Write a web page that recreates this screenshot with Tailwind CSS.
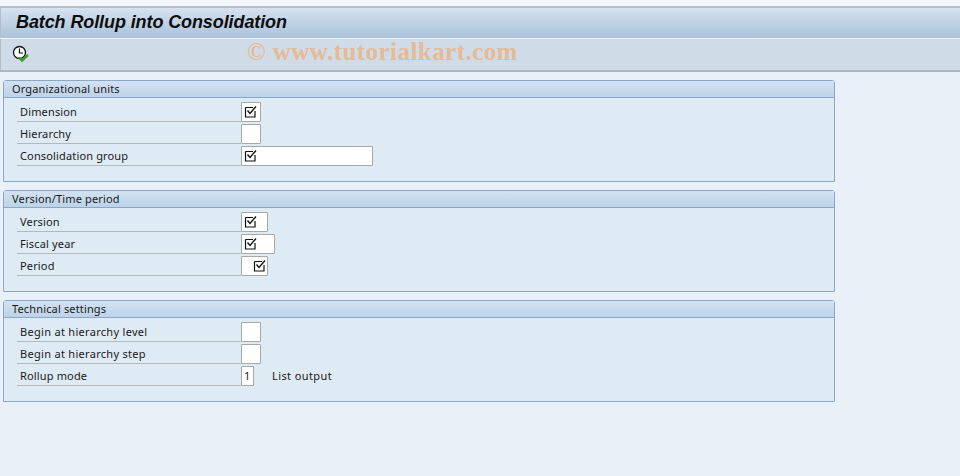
<!DOCTYPE html>
<html>
<head>
<script src="https://cdn.jsdelivr.net/npm/@tailwindcss/browser@4"></script>
</head>
<body class="m-0 overflow-hidden">
<div class="w-[960px] h-[476px] bg-[#e9f0f8] font-['Noto_Sans',sans-serif] text-[11px] tracking-[0.15px] text-[#1a1a1a] flex flex-col overflow-hidden">
  <div class="h-[6px] bg-[#f3f6fb]"></div>
  <div class="h-[2px] bg-[#b3bccb]"></div>
  <div class="h-[30px] bg-gradient-to-b from-[#d5e2f0] to-[#aac2da] pl-[15px] flex items-center border-l border-[#b3bccb]">
    <span class="font-['Liberation_Sans',sans-serif] font-bold italic text-[18px] tracking-[-0.1px] text-[#0d0d0d] leading-[26px] mt-[-2px]">Batch Rollup into Consolidation</span>
  </div>
  <div class="h-[1px] bg-[#eef3f9]"></div>
  <div class="h-[33px] bg-[#cfdce8] border-b-[2px] border-[#a9b6c6] flex items-center relative border-l border-l-[#b3bccb]">
    <svg class="ml-[11px] mt-[-1px]" width="18" height="18" viewBox="0 0 18 18" fill="none">
      <circle cx="7.5" cy="7.5" r="6" fill="#ffffff" stroke="#111111" stroke-width="1.3"/>
      <path d="M7.5 3.5V8H11" stroke="#111111" stroke-width="1.2"/>
      <path d="M7 12.5L10 15.5L16 10" stroke="#3f9e2e" stroke-width="2.4"/>
    </svg>
    <span class="absolute left-[246px] top-[-2px] font-['Liberation_Serif',serif] font-bold text-[25px] leading-[30px] text-[#e5ba94] tracking-[0.45px]">© www.tutorialkart.com</span>
  </div>
  <div class="flex flex-col gap-[8px] pt-[8px] pl-[3px]">

    <section class="w-[832px] h-[102px] border border-[#8aa8c6] rounded-tr-[3px] rounded-tl-[3px] bg-[#deeaf4]">
      <div class="h-[17px] bg-gradient-to-b from-[#d3e2f1] to-[#bdd3e8] border-b border-[#8aa8c6] pl-[8px] leading-[16px] text-[#1a1a1a]">Organizational units</div>
      <div class="pt-[4px] pl-[13px] flex flex-col gap-[2px]">
        <div class="flex h-[20px]">
          <div class="w-[224px] border-b border-[#b4b8bc] pl-[3px] leading-[20px]">Dimension</div>
          <div class="w-[20px] h-[20px] bg-white border border-[#a8a8a8] rounded-[1px] flex items-center pl-[2px]"><svg width="14" height="14" viewBox="0 0 14 14" fill="none"><path d="M1.5 2.5H9M1.5 2.5V12H11V6" stroke="#111" stroke-width="1.2"/><path d="M3.5 5.5L6 8.5L12 1.5" stroke="#111" stroke-width="1.4"/></svg></div>
        </div>
        <div class="flex h-[20px]">
          <div class="w-[224px] border-b border-[#b4b8bc] pl-[3px] leading-[20px]">Hierarchy</div>
          <div class="w-[20px] h-[20px] bg-white border border-[#a8a8a8] rounded-[1px]"></div>
        </div>
        <div class="flex h-[20px]">
          <div class="w-[224px] border-b border-[#b4b8bc] pl-[3px] leading-[20px]">Consolidation group</div>
          <div class="w-[132px] h-[20px] bg-white border border-[#a8a8a8] rounded-[1px] flex items-center pl-[2px]"><svg width="14" height="14" viewBox="0 0 14 14" fill="none"><path d="M1.5 2.5H9M1.5 2.5V12H11V6" stroke="#111" stroke-width="1.2"/><path d="M3.5 5.5L6 8.5L12 1.5" stroke="#111" stroke-width="1.4"/></svg></div>
        </div>
      </div>
    </section>

    <section class="w-[832px] h-[102px] border border-[#8aa8c6] rounded-tr-[3px] rounded-tl-[3px] bg-[#deeaf4]">
      <div class="h-[17px] bg-gradient-to-b from-[#d3e2f1] to-[#bdd3e8] border-b border-[#8aa8c6] pl-[8px] leading-[16px] text-[#1a1a1a]">Version/Time period</div>
      <div class="pt-[4px] pl-[13px] flex flex-col gap-[2px]">
        <div class="flex h-[20px]">
          <div class="w-[224px] border-b border-[#b4b8bc] pl-[3px] leading-[20px]">Version</div>
          <div class="w-[27px] h-[20px] bg-white border border-[#a8a8a8] rounded-[1px] flex items-center pl-[2px]"><svg width="14" height="14" viewBox="0 0 14 14" fill="none"><path d="M1.5 2.5H9M1.5 2.5V12H11V6" stroke="#111" stroke-width="1.2"/><path d="M3.5 5.5L6 8.5L12 1.5" stroke="#111" stroke-width="1.4"/></svg></div>
        </div>
        <div class="flex h-[20px]">
          <div class="w-[224px] border-b border-[#b4b8bc] pl-[3px] leading-[20px]">Fiscal year</div>
          <div class="w-[34px] h-[20px] bg-white border border-[#a8a8a8] rounded-[1px] flex items-center pl-[2px]"><svg width="14" height="14" viewBox="0 0 14 14" fill="none"><path d="M1.5 2.5H9M1.5 2.5V12H11V6" stroke="#111" stroke-width="1.2"/><path d="M3.5 5.5L6 8.5L12 1.5" stroke="#111" stroke-width="1.4"/></svg></div>
        </div>
        <div class="flex h-[20px]">
          <div class="w-[224px] border-b border-[#b4b8bc] pl-[3px] leading-[20px]">Period</div>
          <div class="w-[27px] h-[20px] bg-white border border-[#a8a8a8] rounded-[1px] flex items-center justify-end"><svg width="14" height="14" viewBox="0 0 14 14" fill="none"><path d="M1.5 2.5H9M1.5 2.5V12H11V6" stroke="#111" stroke-width="1.2"/><path d="M3.5 5.5L6 8.5L12 1.5" stroke="#111" stroke-width="1.4"/></svg></div>
        </div>
      </div>
    </section>

    <section class="w-[832px] h-[102px] border border-[#8aa8c6] rounded-tr-[3px] rounded-tl-[3px] bg-[#deeaf4]">
      <div class="h-[17px] bg-gradient-to-b from-[#d3e2f1] to-[#bdd3e8] border-b border-[#8aa8c6] pl-[8px] leading-[16px] text-[#1a1a1a]">Technical settings</div>
      <div class="pt-[4px] pl-[13px] flex flex-col gap-[2px]">
        <div class="flex h-[20px]">
          <div class="w-[224px] border-b border-[#b4b8bc] pl-[3px] leading-[20px] tracking-[0.3px]">Begin at hierarchy level</div>
          <div class="w-[20px] h-[20px] bg-white border border-[#a8a8a8] rounded-[1px]"></div>
        </div>
        <div class="flex h-[20px]">
          <div class="w-[224px] border-b border-[#b4b8bc] pl-[3px] leading-[20px] tracking-[0.3px]">Begin at hierarchy step</div>
          <div class="w-[20px] h-[20px] bg-white border border-[#a8a8a8] rounded-[1px]"></div>
        </div>
        <div class="flex h-[20px]">
          <div class="w-[224px] border-b border-[#b4b8bc] pl-[3px] leading-[20px]">Rollup mode</div>
          <div class="w-[13px] h-[20px] bg-white border border-[#a8a8a8] rounded-[1px] pl-[2px] leading-[18px]">1</div>
          <div class="ml-[18px] leading-[20px] tracking-[0.4px]">List output</div>
        </div>
      </div>
    </section>

  </div>
</div>
</body>
</html>
